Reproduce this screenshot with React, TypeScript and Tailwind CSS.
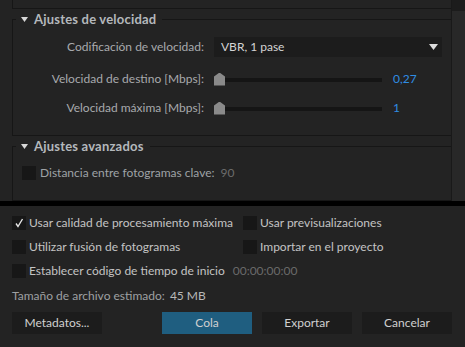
import React from 'react';

const line = 'bg-[#161616]';

function Header({ title }: { title: string }) {
  return (
    <div className="flex items-center h-[14px]">
      <div className="w-[4px] h-[7px] self-end border-l border-t border-[#161616]" />
      <div className="w-[14px] flex justify-center pl-[2px]">
        <svg width="7" height="5" viewBox="0 0 7 5"><path d="M0 0H7L3.5 5Z" fill="#d8d8d8" /></svg>
      </div>
      <span className="ml-[4px] font-bold text-[13px] text-[#b4b8bc] tracking-[0.2px]">{title}</span>
      <div className={`flex-1 h-px ml-[6px] ${line}`} />
    </div>
  );
}

function Slider({ value }: { value: string }) {
  return (
    <div className="flex items-center">
      <div className="flex items-center w-[168px] h-[14px]">
        <div className="w-[11px] h-[13px] bg-[#8a8a8a] [clip-path:polygon(50%_0,100%_30%,100%_100%,0_100%,0_30%)]" />
        <div className="flex-1 h-[4px] bg-[#151515] mt-[2px]" />
      </div>
      <span className="ml-[11px] text-[#2f8de4]">{value}</span>
    </div>
  );
}

function Check({ checked }: { checked?: boolean }) {
  return (
    <div className="w-[14px] h-[14px] bg-[#171717] flex items-center justify-center shrink-0">
      {checked && (
        <svg width="10" height="10" viewBox="0 0 10 10"><path d="M2 5.5L4 8.5L8.5 1" stroke="#e6e6e6" strokeWidth="1.4" fill="none" /></svg>
      )}
    </div>
  );
}

export default function App() {
  return (
    <div className="w-[465px] h-[347px] bg-[#232323] flex flex-col overflow-hidden text-[12px] leading-[14px] text-[#a8aaad] font-['Lato','Noto_Sans',sans-serif]">
      <div className="h-[201px] flex shrink-0">
        <div className="flex-1 pl-[12px]">
          <div className="h-[9px] border-l border-b border-[#161616]" />
          <div className="mt-[3px]">
            <Header title="Ajustes de velocidad" />
            <div className="h-[110px] border-l border-b border-[#161616] pt-[11px]">
              <div className="grid grid-cols-[191px_1fr] gap-x-[10px] items-center">
                <div className="text-right h-[20px] leading-[20px]">Codificación de velocidad:</div>
                <div className="h-[20px] w-[228px] bg-[#1c1c1c] flex items-center justify-between pl-[7px] pr-[4px] text-[#d4d4d4]">
                  <span>VBR, 1 pase</span>
                  <svg width="9" height="6" viewBox="0 0 9 6"><path d="M0 0H9L4.5 6Z" fill="#dcdcdc" /></svg>
                </div>
                <div className="text-right mt-[15px]">Velocidad de destino [Mbps]:</div>
                <div className="mt-[15px]"><Slider value="0,27" /></div>
                <div className="text-right mt-[15px]">Velocidad máxima [Mbps]:</div>
                <div className="mt-[15px]"><Slider value="1" /></div>
              </div>
            </div>
          </div>
          <div className="mt-[3px]">
            <Header title="Ajustes avanzados" />
            <div className="h-[48px] border-l border-b border-[#161616] pt-[13px] pl-[9px] flex items-start">
              <Check />
              <span className="ml-[4px] text-[#9ea2a6]">Distancia entre fotogramas clave:</span>
              <span className="ml-[6px] text-[#6c6c6c]">90</span>
            </div>
          </div>
        </div>
        <div className="w-[14px] border-l border-[#191919] flex flex-col">
          <div className="h-[11px] bg-[#1c1c1c]" />
          <div className="flex-1 bg-[#282828]" />
        </div>
      </div>
      <div className="h-[5px] bg-black shrink-0" />
      <div className="px-[12px] pt-[10px] text-[#c4c4c4]">
        <div className="grid grid-cols-[231px_1fr] gap-y-[10px]">
          <div className="flex items-center gap-[3px] whitespace-nowrap"><Check checked /><span>Usar calidad de procesamiento máxima</span></div>
          <div className="flex items-center gap-[3px]"><Check /><span>Usar previsualizaciones</span></div>
          <div className="flex items-center gap-[3px]"><Check /><span>Utilizar fusión de fotogramas</span></div>
          <div className="flex items-center gap-[3px]"><Check /><span>Importar en el proyecto</span></div>
          <div className="col-span-2 flex items-center gap-[3px]">
            <Check /><span>Establecer código de tiempo de inicio</span>
            <span className="ml-[5px] text-[#6a6a6a]">00:00:00:00</span>
          </div>
        </div>
        <div className="mt-[11px] text-[#9ea0a2]">
          Tamaño de archivo estimado: <span className="ml-[2px] text-[#b8b8b8]">45 MB</span>
        </div>
        <div className="mt-[9px] flex text-[#d0d0d0]">
          <button className="w-[90px] h-[22px] bg-[#1c1c1c]">Metadatos...</button>
          <button className="ml-[60px] w-[90px] h-[22px] bg-[#1f5e80]">Cola</button>
          <button className="ml-[10px] w-[90px] h-[22px] bg-[#1c1c1c]">Exportar</button>
          <button className="ml-[10px] w-[90px] h-[22px] bg-[#1c1c1c]">Cancelar</button>
        </div>
      </div>
    </div>
  );
}
